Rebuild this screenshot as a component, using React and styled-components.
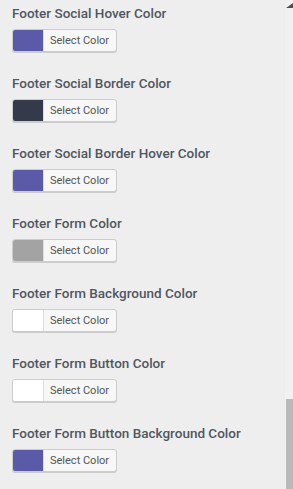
import React from 'react';
import styled, { createGlobalStyle } from 'styled-components';

const GlobalStyle = createGlobalStyle`
  html, body {
    margin: 0;
    padding: 0;
    background: #eeeeee;
  }
  body {
    font-family: Roboto, "Noto Sans", "Liberation Sans", sans-serif;
    overflow: hidden;
  }
`;

const Page = styled.div`
  display: flex;
  height: 489px;
  width: 293px;
  background: #eeeeee;
`;

const Panel = styled.div`
  flex: 1;
  padding-left: 12px;
  overflow: hidden;
`;

const Row = styled.div`
  display: flex;
  flex-direction: column;
  align-items: flex-start;
  height: 70px;
  padding-top: 4px;
  box-sizing: border-box;
`;

const Label = styled.div`
  font-size: 13.5px;
  font-weight: 500;
  line-height: 18px;
  color: #50575e;
  white-space: nowrap;
  margin-bottom: 7px;
`;

const PickerButton = styled.button`
  display: flex;
  align-items: stretch;
  height: 23px;
  padding: 0;
  border: 1px solid #cccccc;
  border-radius: 3px;
  background: #f7f7f7;
  box-shadow: 0 1px 0 #cccccc;
  overflow: hidden;
  cursor: pointer;
  font-family: inherit;
`;

const Swatch = styled.span`
  width: 30px;
  background: ${(p) => p.color};
  border-right: 1px solid #dddddd;
`;

const ButtonText = styled.span`
  display: flex;
  align-items: center;
  padding: 0 7px 0 6px;
  font-size: 11px;
  color: #555555;
`;

const Scrollbar = styled.div`
  width: 8px;
  display: flex;
  flex-direction: column;
  background: #f1f1f1;
`;

const ArrowUp = styled.svg`
  display: block;
  margin: 3px 0 0 1px;
`;

const Thumb = styled.div`
  margin-top: auto;
  height: 90px;
  background: #b9b9b9;
  margin-left: 1px;
`;

const rows = [
  { label: 'Footer Social Hover Color', color: '#5b5aa8' },
  { label: 'Footer Social Border Color', color: '#353a4b' },
  { label: 'Footer Social Border Hover Color', color: '#5b5aa8' },
  { label: 'Footer Form Color', color: '#a3a3a3' },
  { label: 'Footer Form Background Color', color: '#ffffff' },
  { label: 'Footer Form Button Color', color: '#ffffff' },
  { label: 'Footer Form Button Background Color', color: '#5b5aa8' },
];

export default function App() {
  return (
    <>
      <GlobalStyle />
      <Page>
        <Panel>
          {rows.map((r) => (
            <Row key={r.label}>
              <Label>{r.label}</Label>
              <PickerButton type="button">
                <Swatch color={r.color} />
                <ButtonText>Select Color</ButtonText>
              </PickerButton>
            </Row>
          ))}
        </Panel>
        <Scrollbar>
          <ArrowUp width="7" height="5" viewBox="0 0 7 5">
            <path d="M7 0 L7 5 L0 5 Z" fill="#505050" />
          </ArrowUp>
          <Thumb />
        </Scrollbar>
      </Page>
    </>
  );
}
